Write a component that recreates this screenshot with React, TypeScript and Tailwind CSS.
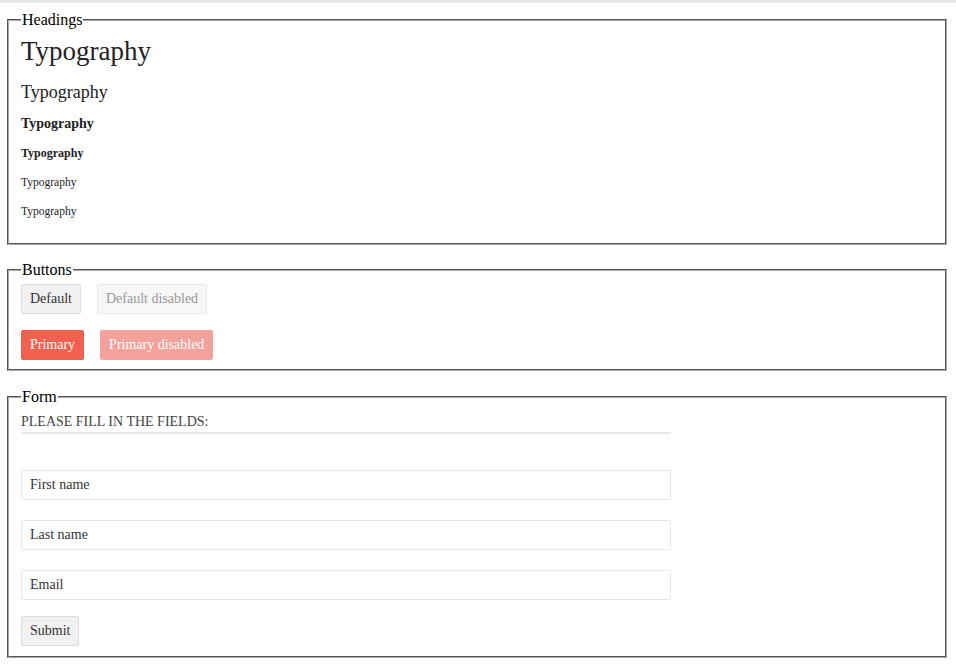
import React from 'react';

const serif = "font-['Liberation_Serif','Times_New_Roman',serif]";

function Group({ title, children, className = '' }: { title: string; children: React.ReactNode; className?: string }) {
  return (
    <fieldset
      className={`ml-[7px] w-[940px] border-2 [border-style:groove] border-[#a9a9a9] px-[12px] ${className}`}
    >
      <legend className="px-[1px] text-[16px] leading-[18px] text-black">{title}</legend>
      {children}
    </fieldset>
  );
}

function Button({ label, variant = 'default', disabled = false }: { label: string; variant?: 'default' | 'primary'; disabled?: boolean }) {
  const base = 'h-[30px] rounded-[2px] border px-[8px] text-[14px] leading-[16px]';
  const styles =
    variant === 'primary'
      ? disabled
        ? 'bg-[#f2a19b] border-[#f2a19b] text-white'
        : 'bg-[#f2604f] border-[#f05a49] text-white'
      : disabled
        ? 'bg-[#f7f7f7] border-[#e8e8e8] text-[#9a9a9a]'
        : 'bg-[#f1f1f1] border-[#dcdcdc] text-[#333]';
  return (
    <button type="button" disabled={disabled} className={`${base} ${styles}`}>
      {label}
    </button>
  );
}

function Field({ placeholder }: { placeholder: string }) {
  return (
    <input
      type="text"
      placeholder={placeholder}
      className="h-[30px] w-[650px] rounded-[2px] border border-[#e8e8e8] px-[8px] text-[14px] text-[#333] placeholder:text-[#333] outline-none"
    />
  );
}

export default function App() {
  return (
    <div className={`${serif} min-h-[671px] bg-white text-[#222]`}>
      <div className="h-[3px] border-b border-[#f0f0f0] bg-[#e3e3e3]" />

      <div className="pt-[8px]">
        <Group title="Headings" className="pb-[25px]">
          <div className="flex flex-col items-start">
            <h1 className="mt-[7px] text-[27px] leading-[31px]">Typography</h1>
            <h2 className="mt-[15px] text-[18px] leading-[21px]">Typography</h2>
            <h3 className="mt-[13px] text-[14px] font-bold leading-[16px]">Typography</h3>
            <h4 className="mt-[14px] text-[12px] font-bold leading-[14px]">Typography</h4>
            <h5 className="mt-[15px] text-[11.5px] leading-[14px]">Typography</h5>
            <h6 className="mt-[15px] text-[11.5px] leading-[14px]">Typography</h6>
          </div>
        </Group>

        <Group title="Buttons" className="mt-[16px] pb-[9px]">
          <div className="mt-[5px] flex gap-[16px]">
            <Button label="Default" />
            <Button label="Default disabled" disabled />
          </div>
          <div className="mt-[16px] flex gap-[16px]">
            <Button label="Primary" variant="primary" />
            <Button label="Primary disabled" variant="primary" disabled />
          </div>
        </Group>

        <Group title="Form" className="mt-[17px] pb-[10px]">
          <form className="flex flex-col items-start" onSubmit={(e) => e.preventDefault()}>
            <div className="mt-[8px] w-[650px] border-b-2 border-[#e8e8e8] pb-[2px] text-[14px] uppercase leading-[16px] text-[#444]">
              Please fill in the fields:
            </div>
            <div className="mt-[36px] flex flex-col gap-[20px]">
              <Field placeholder="First name" />
              <Field placeholder="Last name" />
              <Field placeholder="Email" />
            </div>
            <div className="mt-[16px]">
              <Button label="Submit" />
            </div>
          </form>
        </Group>
      </div>
    </div>
  );
}
